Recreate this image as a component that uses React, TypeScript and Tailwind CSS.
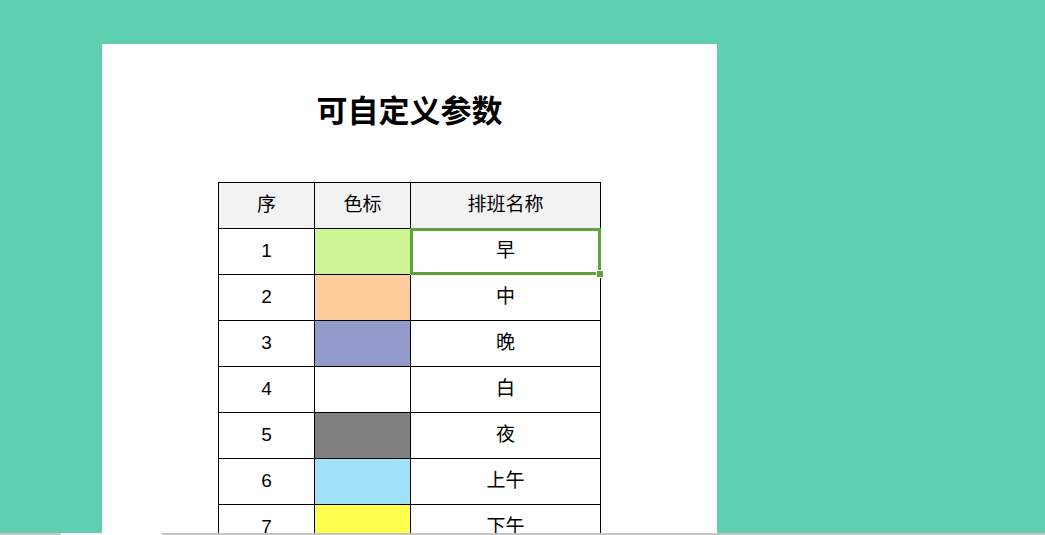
const rows = [
  { n: "1", color: "bg-[#ccf495]", name: "早" },
  { n: "2", color: "bg-[#ffcc9c]", name: "中" },
  { n: "3", color: "bg-[#939bcb]", name: "晚" },
  { n: "4", color: "bg-white", name: "白" },
  { n: "5", color: "bg-[#7f7f7f]", name: "夜" },
  { n: "6", color: "bg-[#9fe1f8]", name: "上午" },
  { n: "7", color: "bg-[#ffff4d]", name: "下午" },
];

export default function App() {
  return (
    <div
      className="relative h-[535px] w-[1045px] overflow-hidden bg-[#5ecfb1] pt-[44px] pl-[102px]"
      style={{ fontFamily: '"Liberation Sans", "Noto Sans CJK SC", sans-serif' }}
    >
      <div className="h-[600px] w-[615px] bg-white pt-[48px]">
        <h1 className="text-center text-[31px] leading-[40px] font-bold text-black">
          可自定义参数
        </h1>

        <table className="mx-auto mt-[50px] border-collapse text-[19px] text-black">
          <thead>
            <tr className="h-[46px] bg-[#f2f2f2]">
              <th className="w-[96px] border border-black font-normal">序</th>
              <th className="w-[96px] border border-black font-normal">色标</th>
              <th className="w-[190px] border border-black font-normal">排班名称</th>
            </tr>
          </thead>
          <tbody>
            {rows.map((r, i) => (
              <tr key={r.n} className="h-[46px]">
                <td className="border border-black text-center">{r.n}</td>
                <td className={`border border-black ${r.color}`} />
                <td className="relative border border-black text-center">
                  {r.name}
                  {i === 0 && (
                    <>
                      <span className="absolute -top-px -left-px -right-px -bottom-px border-[3px] border-[#5fa33a]" />
                      <span className="absolute -right-[3px] -bottom-[3px] h-[6px] w-[6px] bg-[#5fa33a] ring-1 ring-white" />
                    </>
                  )}
                </td>
              </tr>
            ))}
          </tbody>
        </table>
      </div>

      {/* bottom scrollbar track */}
      <div className="absolute right-0 bottom-0 left-0 flex h-[2px]">
        <div className="w-[61px] bg-[#c4c4c4]" />
        <div className="w-[101px] bg-white" />
        <div className="flex-1 bg-[#c4c4c4]" />
      </div>
    </div>
  );
}
